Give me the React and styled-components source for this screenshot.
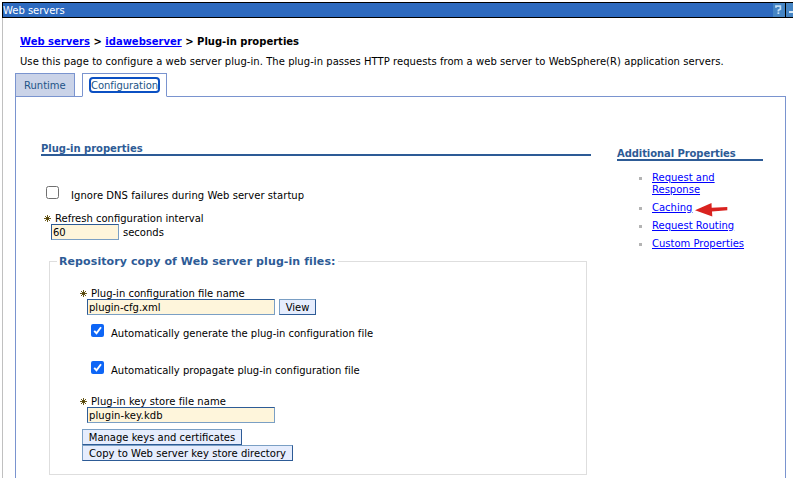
import React from 'react';
import styled, { createGlobalStyle, css } from 'styled-components';

const GlobalStyle = createGlobalStyle`
  *, *::before, *::after { box-sizing: border-box; }
  html, body { margin: 0; padding: 0; background: #fff; overflow: hidden; }
  body {
    font-family: "DejaVu Sans", Verdana, sans-serif;
    font-size: 10px;
    line-height: 12px;
    color: #000;
  }
`;

const Portlet = styled.div`
  width: 799px;
  height: 478px;
  padding: 2px 0 0 2px;
  overflow: hidden;
`;

const TitleBar = styled.header`
  display: flex;
  height: 16px;
  border: 1px solid #000;
  background: #2d6abf;
  color: #fff;
`;

const Title = styled.h1`
  flex: 1;
  margin: 0;
  padding-top: 2px;
  font-size: 10px;
  font-weight: 400;
  letter-spacing: -0.02px;
`;

const TitleIcon = styled.svg`
  display: block;
  width: 12px;
  height: 14px;
  margin-right: ${(p) => (p.$divided ? '0' : '1px')};
  box-shadow: ${(p) => (p.$divided ? '-1px 0 0 #000' : 'none')};
`;

const Body = styled.main`
  height: 460px;
  padding: 18px 0 0 13px;
  border-left: 1px solid #c0c0c0;
`;

const Breadcrumb = styled.nav`
  height: 20px;
  padding-left: 4px;
  font-weight: 700;
  white-space: pre;
`;

const Link = styled.a`
  color: #00f;
  text-decoration: underline;
`;

const Intro = styled.p`
  height: 17px;
  margin: 0 0 0 4px;
  letter-spacing: 0.05px;
  white-space: nowrap;
`;

const Content = styled.div`
  width: 771px;
  margin-left: -1px;
`;

const TabList = styled.div`
  display: flex;
  gap: 7px;
  height: 24px;
  box-shadow: inset 0 -1px 0 #7a94cf;
`;

const Tab = styled.div`
  width: ${(p) => p.$width}px;
  border: 1px solid #7a94cf;
  padding: ${(p) => (p.$active ? '3px 6px 0' : '6px 8px 0')};
  background: ${(p) => (p.$active ? '#fff' : '#cad3e8')};
  color: #1d5487;
  ${(p) => p.$active && css`border-bottom-color: #fff;`}
`;

const FocusRing = styled.span`
  display: block;
  width: 71px;
  height: 16px;
  padding: 1px 0 0;
  border: 2px solid #0b50c3;
  border-radius: 4px;
  line-height: 12px;
  white-space: nowrap;
  letter-spacing: -0.06px;
`;

const Panel = styled.section`
  display: flex;
  align-items: flex-start;
  gap: 26px;
  height: 400px;
  padding: 46px 0 0 25px;
  border: 1px solid #7a94cf;
  border-top: 0;
`;

const MainColumn = styled.div`
  width: 550px;
`;

const SectionTitle = styled.h2`
  height: 13px;
  margin: 0 0 ${(p) => p.$spaceAfter || 0}px;
  border-bottom: 2px solid #2d5b96;
  color: #2d5b96;
  font-size: 10px;
  font-weight: 700;
  letter-spacing: ${(p) => p.$tracking}px;
`;

const CheckRow = styled.label`
  display: flex;
  align-items: flex-start;
  gap: ${(p) => p.$gap}px;
  height: ${(p) => p.$height}px;
  padding-left: ${(p) => p.$indent}px;
  letter-spacing: ${(p) => p.$tracking || 0}px;
  white-space: nowrap;

  span { padding-top: 4px; }
`;

const CheckGroup = styled.div`
  padding-top: 9px;
`;

const CheckIcon = styled.svg`
  display: block;
  width: 13px;
  height: 13px;
`;

const FieldLabel = styled.div`
  display: flex;
  gap: 4px;
  height: 11px;
  padding-left: ${(p) => p.$indent || 0}px;
  letter-spacing: ${(p) => p.$tracking || 0}px;
  white-space: nowrap;
`;

const Star = styled.svg`
  width: 7px;
  height: 7px;
  margin-top: 2px;
`;

const FieldRow = styled.div`
  display: flex;
  gap: 4px;
  height: 16px;
  padding-left: ${(p) => p.$indent}px;
  line-height: 18px;
`;

const TextInput = styled.input`
  width: ${(p) => p.$width}px;
  height: 16px;
  padding: 0 0 0 1px;
  border: 1px solid;
  border-color: #2d5b96 #7a9fc4 #7a9fc4 #2d5b96;
  border-radius: 0;
  outline: 0;
  background: #fef5db;
  color: #000;
  font: 10px/14px "DejaVu Sans", Verdana, sans-serif;
  letter-spacing: ${(p) => p.$tracking || 0}px;
`;

const Button = styled.button`
  display: block;
  width: ${(p) => p.$width}px;
  height: 16px;
  margin: 0;
  padding: 1px 0 0;
  border: 1px solid;
  border-color: #7a9fc4 #2d5b96 #2d5b96 #7a9fc4;
  border-radius: 0;
  background: #e6edfd;
  color: #000;
  font: 10px/13px "DejaVu Sans", Verdana, sans-serif;
  letter-spacing: ${(p) => p.$tracking || 0}px;
`;

const Fieldset = styled.fieldset`
  width: 538px;
  height: 220px;
  margin: 15px 0 0 8px;
  padding: 21px 0 0 30px;
  border: 1px solid #dedede;
  min-width: 0;
`;

const Legend = styled.legend`
  height: 12px;
  margin-left: -23px;
  padding: 0 2px;
  color: #2d5b96;
  font-size: 11px;
  font-weight: 700;
  line-height: 14px;
  letter-spacing: 0.095px;
`;

const ButtonStack = styled.div`
  padding: 6px 0 0 2px;
`;

const SideColumn = styled.aside`
  width: 146px;
  padding-top: 5px;
`;

const LinkList = styled.ul`
  display: flex;
  flex-direction: column;
  gap: 6px;
  margin: 0;
  padding: 11px 0 0 22px;
  list-style: none;
`;

const LinkItem = styled.li`
  display: flex;
  align-items: flex-start;
  gap: 10px;

  &::before {
    content: "";
    width: 3px;
    height: 3px;
    margin-top: 5px;
    background: #b4b4b4;
  }
`;

const LinkText = styled(Link)`
  width: ${(p) => (p.$narrow ? '80px' : 'auto')};
`;

const Pointer = styled.svg`
  flex: none;
  width: 33px;
  height: 14px;
  margin: 1px 0 -3px -7px;
`;

const Checkbox = ({ checked }) => (
  <CheckIcon viewBox="0 0 13 13">
    {checked ? (
      <>
        <rect width="13" height="13" rx="2" fill="#0e66f6" />
        <path d="M3.2 6.8 5.5 9.2 10 3.2" fill="none" stroke="#fff" strokeWidth="1.9" />
      </>
    ) : (
      <rect x=".5" y=".5" width="12" height="12" rx="2" fill="#fff" stroke="#707070" />
    )}
  </CheckIcon>
);

const Required = () => (
  <Star viewBox="0 0 7 7">
    <path d="M3.5 0v7M0 3.5h7M1 1l5 5M6 1 1 6" stroke="#6b5b1c" strokeWidth="1" fill="none" />
    <rect x="2.3" y="2.3" width="2.4" height="2.4" fill="#51430c" />
  </Star>
);

export default function App() {
  return (
    <>
      <GlobalStyle />
      <Portlet>
        <TitleBar>
          <Title>Web servers</Title>
          <TitleIcon viewBox="0 0 12 14">
            <rect width="12" height="14" fill="#4585c4" />
            <path d="M3 4.8V3.2h4.4v3L5.4 7.3v1.3" fill="none" stroke="#c4e0f6" strokeWidth="1.7" />
            <path d="M4.5 9.3h1.8v1.7H4.5z" fill="#c4e0f6" />
          </TitleIcon>
          <TitleIcon viewBox="0 0 12 14" $divided>
            <rect width="12" height="14" fill="#4585c4" />
            <path d="M3 8h7v2H3z" fill="#d4e8f8" />
          </TitleIcon>
        </TitleBar>
        <Body>
          <Breadcrumb>
            <Link href="#">Web servers</Link>{' > '}
            <Link href="#">idawebserver</Link>{' > Plug-in properties'}
          </Breadcrumb>
          <Intro>
            Use this page to configure a web server plug-in. The plug-in passes HTTP requests from a
            web server to WebSphere(R) application servers.
          </Intro>
          <Content>
            <TabList>
              <Tab $width={60}>Runtime</Tab>
              <Tab $width={85} $active>
                <FocusRing>Configuration</FocusRing>
              </Tab>
            </TabList>
            <Panel>
              <MainColumn>
                <SectionTitle $spaceAfter={30} $tracking={-0.02}>Plug-in properties</SectionTitle>
                <CheckRow $indent={5} $gap={12} $height={27} $tracking={0.05}>
                  <Checkbox />
                  <span>Ignore DNS failures during Web server startup</span>
                </CheckRow>
                <FieldLabel $indent={3}>
                  <Required />
                  Refresh configuration interval
                </FieldLabel>
                <FieldRow $indent={10}>
                  <TextInput $width={68} defaultValue="60" />
                  seconds
                </FieldRow>
                <Fieldset>
                  <Legend>Repository copy of Web server plug-in files:</Legend>
                  <FieldLabel>
                    <Required />
                    Plug-in configuration file name
                  </FieldLabel>
                  <FieldRow $indent={7}>
                    <TextInput $width={188} defaultValue="plugin-cfg.xml" />
                    <Button $width={37}>View</Button>
                  </FieldRow>
                  <CheckGroup>
                    <CheckRow $indent={11} $gap={7} $height={37} $tracking={-0.01}>
                      <Checkbox checked />
                      <span>Automatically generate the plug-in configuration file</span>
                    </CheckRow>
                    <CheckRow $indent={11} $gap={7} $height={35} $tracking={-0.01}>
                      <Checkbox checked />
                      <span>Automatically propagate plug-in configuration file</span>
                    </CheckRow>
                  </CheckGroup>
                  <FieldLabel $tracking={0.06}>
                    <Required />
                    Plug-in key store file name
                  </FieldLabel>
                  <FieldRow $indent={7}>
                    <TextInput $width={188} $tracking={0.1} defaultValue="plugin-key.kdb" />
                  </FieldRow>
                  <ButtonStack>
                    <Button $width={160}>Manage keys and certificates</Button>
                    <Button $width={211} $tracking={0.04}>Copy to Web server key store directory</Button>
                  </ButtonStack>
                </Fieldset>
              </MainColumn>
              <SideColumn>
                <SectionTitle $tracking={-0.08}>Additional Properties</SectionTitle>
                <LinkList>
                  <LinkItem><LinkText href="#" $narrow>Request and Response</LinkText></LinkItem>
                  <LinkItem>
                    <LinkText href="#">Caching</LinkText>
                    <Pointer viewBox="0 0 33 14">
                      <path d="M0 7.3 16.5 0l.2 4.8L32.3 4v3.2L17 8.6l.3 4.9z" fill="#d9221f" />
                    </Pointer>
                  </LinkItem>
                  <LinkItem><LinkText href="#">Request Routing</LinkText></LinkItem>
                  <LinkItem><LinkText href="#">Custom Properties</LinkText></LinkItem>
                </LinkList>
              </SideColumn>
            </Panel>
          </Content>
        </Body>
      </Portlet>
    </>
  );
}
